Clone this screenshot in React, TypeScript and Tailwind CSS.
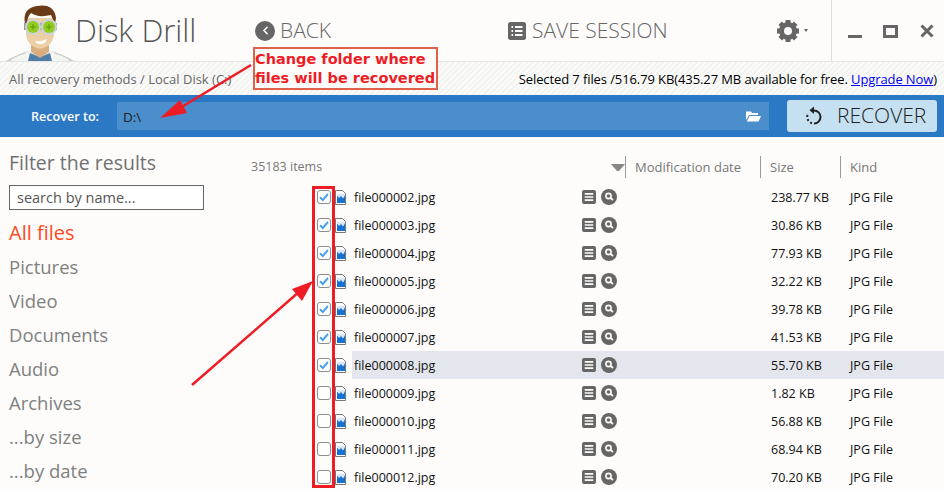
import React from 'react';
import { ChevronLeft } from 'lucide-react';

const files = [
  { name: 'file000002.jpg', size: '238.77 KB', checked: true },
  { name: 'file000003.jpg', size: '30.86 KB', checked: true },
  { name: 'file000004.jpg', size: '77.93 KB', checked: true },
  { name: 'file000005.jpg', size: '32.22 KB', checked: true },
  { name: 'file000006.jpg', size: '39.78 KB', checked: true },
  { name: 'file000007.jpg', size: '41.53 KB', checked: true },
  { name: 'file000008.jpg', size: '55.70 KB', checked: true, active: true },
  { name: 'file000009.jpg', size: '1.82 KB', checked: false },
  { name: 'file000010.jpg', size: '56.88 KB', checked: false },
  { name: 'file000011.jpg', size: '68.94 KB', checked: false },
  { name: 'file000012.jpg', size: '70.20 KB', checked: false },
];

const filters = ['All files', 'Pictures', 'Video', 'Documents', 'Audio', 'Archives', '...by size', '...by date'];

function Logo() {
  return (
    <svg width="80" height="61" viewBox="0 0 80 61" className="shrink-0">
      {/* coat */}
      <path d="M6 61 Q18 54 30 51 L50 51 Q62 54 74 61 Z" fill="#f4f4f2" />
      <path d="M6 61 Q18 54 29 51 L24 54 Q14 57 10 61 Z" fill="#c9c9c5" />
      <path d="M74 61 Q62 54 51 51 L56 54 Q66 57 70 61 Z" fill="#c9c9c5" />
      <path d="M28 61 L30 53 L40 57 L50 53 L52 61 Z" fill="#4f7fa8" />
      {/* neck and face */}
      <path d="M31 42 L31 52 L40 58 L49 52 L49 42 Z" fill="#d9ad7f" />
      <path d="M26 18 L54 18 L54 34 Q53 46 40 49 Q27 46 26 34 Z" fill="#edcfa5" />
      {/* hair */}
      <path d="M25 24 Q22 8 37 6 Q54 3 56 18 L55 24 L51 15 Q38 18 31 13 Q27 17 27 24 Z" fill="#6b3a17" />
      {/* goggles */}
      <rect x="24" y="23" width="33" height="7" fill="#8f9aa3" />
      <circle cx="33" cy="27" r="8" fill="#ccd3d8" />
      <circle cx="49" cy="27" r="8" fill="#ccd3d8" />
      <circle cx="33" cy="27" r="6" fill="#93cc1e" />
      <circle cx="49" cy="27" r="6" fill="#93cc1e" />
      <path d="M30 27h6M33 24v6M46 27h6M49 24v6" stroke="#5d9410" strokeWidth="1" />
      {/* smile */}
      <path d="M35 41 Q41 42 47 39 Q45 45 40 44 Q36 44 35 41 Z" fill="#ffffff" />
    </svg>
  );
}

function ListIcon({ size, bullets }: { size: number; bullets?: boolean }) {
  return (
    <svg width={size} height={size} viewBox="0 0 18 18" className="shrink-0">
      <rect width="18" height="18" rx="2.5" fill="#666" />
      {bullets ? (
        <path d="M3.5 5h1.6M3.5 9h1.6M3.5 13h1.6M7 5h7.5M7 9h7.5M7 13h7.5" stroke="#fdfcfb" strokeWidth="2" />
      ) : (
        <path d="M3.5 5h11M3.5 9h11M3.5 13h11" stroke="#fdfcfb" strokeWidth="2" />
      )}
    </svg>
  );
}

function SearchIcon() {
  return (
    <svg width="16" height="16" viewBox="0 0 16 16" className="shrink-0">
      <circle cx="8" cy="8" r="8" fill="#666" />
      <circle cx="7.5" cy="7" r="2.6" fill="none" stroke="#fdfcfb" strokeWidth="1.6" />
      <path d="M9.5 9l2.5 2" stroke="#fdfcfb" strokeWidth="1.8" />
    </svg>
  );
}

function FileIcon() {
  return (
    <svg width="11" height="15" viewBox="0 0 11 15" className="shrink-0">
      <path d="M0.5 0.5H7.5L10.5 3.5V14.5H0.5Z" fill="#fff" stroke="#777" />
      <rect x="2" y="4" width="8" height="9" fill="#1572d0" />
      <path d="M2 5.5L4 8L6 6L8 8.5L10 5.5V4H2Z" fill="#d5e9fb" />
    </svg>
  );
}

function GearIcon() {
  const teeth = [0, 45, 90, 135, 180, 225, 270, 315];
  return (
    <svg width="24" height="24" viewBox="0 0 24 24" className="shrink-0">
      {teeth.map((deg) => (
        <rect key={deg} x="9.5" y="1" width="5" height="5" fill="#666" transform={`rotate(${deg} 12 12)`} />
      ))}
      <circle cx="12" cy="12" r="6.5" fill="none" stroke="#666" strokeWidth="5" />
    </svg>
  );
}

function Checkbox({ checked }: { checked: boolean }) {
  return (
    <div className="w-[14px] h-[14px] rounded-[3px] border border-[#8e8e8e] bg-white flex items-center justify-center shrink-0">
      {checked && (
        <svg width="10" height="10" viewBox="0 0 10 10">
          <path d="M1 5.2L3.8 8L9 2" fill="none" stroke="#4aa3e6" strokeWidth="2" />
        </svg>
      )}
    </div>
  );
}

export default function App() {
  return (
    <div className="relative w-[944px] h-[489px] overflow-hidden bg-[#fdfcfb] font-['Open_Sans',sans-serif]">
      {/* Title bar */}
      <div className="h-[61px] flex items-stretch">
        <Logo />
        <div className="w-[180px] -ml-[5px] text-[31px] font-light text-[#555] leading-[61px]">Disk Drill</div>
        <div className="w-[253px] flex items-center gap-[5px]">
          <div className="w-5 h-5 rounded-full bg-[#666] flex items-center justify-center">
            <ChevronLeft size={13} color="#fdfcfb" strokeWidth={3} />
          </div>
          <span className="text-[21px] font-light text-[#666]">BACK</span>
        </div>
        <div className="w-[268px] flex items-center gap-[6px]">
          <ListIcon size={18} bullets />
          <span className="text-[21px] font-light text-[#666]">SAVE SESSION</span>
        </div>
        <div className="w-[55px] flex items-center gap-[4px]">
          <GearIcon />
          <span className="w-0 h-0 border-x-[2.5px] border-x-transparent border-t-[3px] border-t-[#666]" />
        </div>
        <div className="flex-1 border-l border-[#ddd] flex items-center pl-[16px] pt-[1px]">
          <div className="w-[14px] h-[3px] bg-[#666] mt-[10px]" />
          <div className="w-[15px] h-[13px] border-[3px] border-[#666] ml-[21px]" />
          <svg width="14" height="14" viewBox="0 0 14 14" className="ml-[22px]">
            <path d="M1.5 1.5L12.5 12.5M12.5 1.5L1.5 12.5" stroke="#666" strokeWidth="3" />
          </svg>
        </div>
      </div>

      {/* Status strip */}
      <div className="h-[34px] border-t border-[#e4e4e4] flex items-center justify-between pl-[9px] pr-[7px] pt-[2px] bg-[repeating-linear-gradient(135deg,#f3f3f2_0px,#f3f3f2_2px,#fbfbfa_2px,#fbfbfa_4px)]">
        <span className="text-[13px] text-[#666]">All recovery methods / Local Disk (C:)</span>
        <span className="text-[13px] text-black tracking-[-0.1px]">
          Selected 7 files /516.79 KB(435.27 MB available for free. <span className="text-[#0000ee] underline">Upgrade Now</span>)
        </span>
      </div>

      {/* Recover bar */}
      <div className="h-[42px] bg-[#2b78c5] flex items-center">
        <div className="w-[117px] pl-[31px] pt-[2px] text-[12.6px] font-semibold text-white">Recover to:</div>
        <div className="w-[652px] h-[28px] bg-[#4a8ecb] flex items-center justify-between pl-[6px] pr-[8px]">
          <span className="text-[13.5px] pt-[2px] text-[#222]">D:\</span>
          <svg width="15" height="12" viewBox="0 0 15 12">
            <path d="M0 1.5H5L6 3H12V5H3L0 10Z" fill="#fff" />
            <path d="M3.5 6H15L12.5 11.5H0.8Z" fill="#fff" />
          </svg>
        </div>
        <div className="ml-[18px] w-[150px] h-[32px] rounded-[3px] bg-[#c5e0f0] flex items-center pl-[17px] gap-[13px]">
          <svg width="20" height="20" viewBox="0 0 20 20" className="shrink-0">
            <path d="M10 4.5A6.5 6.5 0 0 1 10 17.5" fill="none" stroke="#222" strokeWidth="2" />
            <path d="M10 0.5V8L5.5 4.2Z" fill="#222" />
            <path d="M8 17.2A6.5 6.5 0 0 1 4.2 7.5" fill="none" stroke="#222" strokeWidth="2" strokeDasharray="2 2.2" />
          </svg>
          <span className="text-[21px] text-[#222] font-light">RECOVER</span>
        </div>
      </div>

      {/* Main */}
      <div className="flex">
        <div className="w-[251px] shrink-0 pl-[9px] pt-[12px]">
          <div className="text-[19.5px] leading-[28px] text-[#707070]">Filter the results</div>
          <div className="mt-[8px] w-[195px] h-[25px] border border-[#666] bg-white pl-[7px] text-[14.5px] leading-[23px] text-[#555]">search by name...</div>
          <div className="mt-[6px]">
            {filters.map((item, index) => (
              <div key={item} className={`h-[34px] leading-[34px] ${index === 0 ? 'text-[20px] text-[#ff4a1c]' : 'text-[18.5px] text-[#808080]'}`}>
                {item}
              </div>
            ))}
          </div>
        </div>

        <div className="flex-1">
          <div className="h-[46px] flex items-center pt-[14px] text-[13px] text-[#777]">
            <span className="w-[360px] text-[12.5px]">35183 items</span>
            <div className="w-[14px] h-0 border-x-[6px] border-x-transparent border-t-[7px] border-t-[#888]" />
            <div className="w-[135px] h-[22px] border-l border-[#999] pl-[9px] leading-[22px]">Modification date</div>
            <div className="w-[80px] h-[22px] border-l border-[#999] pl-[9px] leading-[22px]">Size</div>
            <div className="h-[22px] border-l border-[#999] pl-[9px] leading-[22px]">Kind</div>
          </div>
          {files.map((file) => (
            <div key={file.name} className="h-[28px] flex items-center">
              <div className="w-[66px] shrink-0" />
              <Checkbox checked={file.checked} />
              <div className="w-[4px] shrink-0" />
              <FileIcon />
              <div className={`flex-1 h-[28px] ml-[6px] flex items-center ${file.active ? 'bg-[#e3e6ec]' : ''}`}>
                <span className="w-[230px] pl-[2px] pt-[2px] text-[12.5px] text-[#111]">{file.name}</span>
                <ListIcon size={14} />
                <div className="w-[5px]" />
                <SearchIcon />
                <span className="w-[154px] shrink-0" />
                <span className="w-[79px] shrink-0 pt-[2px] text-[12.5px] text-[#111]">{file.size}</span>
                <span className="pt-[2px] text-[12.5px] text-[#111]">JPG File</span>
              </div>
            </div>
          ))}
        </div>
      </div>

      {/* Annotations */}
      <div className="absolute left-[253px] top-[47px] w-[185px] h-[43px] border-2 border-[#e0604a] bg-[#fdfcfb] font-['DejaVu_Sans',sans-serif] font-bold text-[14.5px] leading-[19px] text-[#ee1c25] whitespace-nowrap pt-[1px]">
        Change folder where<br />files will be recovered
      </div>
      <div className="absolute left-[312px] top-[186px] w-[23px] h-[302px] border-[3px] border-[#ee1c25]" />
      <svg className="absolute left-0 top-0 pointer-events-none" width="944" height="489">
        <path d="M251 65L175 111" stroke="#ee1c25" strokeWidth="2.5" />
        <path d="M160 118L180 100L187 113Z" fill="#ee1c25" />
        <path d="M192 385L300 291" stroke="#ee1c25" strokeWidth="2.5" />
        <path d="M313 281L302 301L292 289Z" fill="#ee1c25" />
      </svg>
    </div>
  );
}
